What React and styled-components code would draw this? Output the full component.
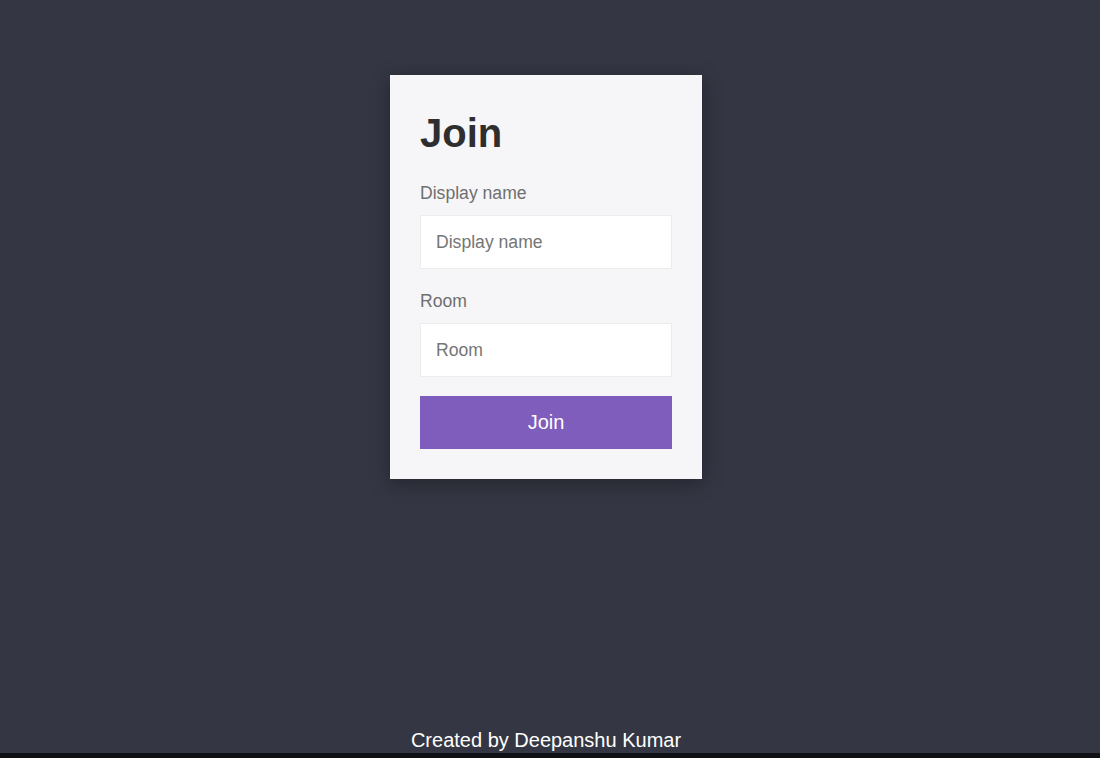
import React from "react";
import styled, { createGlobalStyle } from "styled-components";

const GlobalStyle = createGlobalStyle`
  html, body {
    margin: 0;
    padding: 0;
    background: #0e1013;
    font-family: "Liberation Sans", Arial, sans-serif;
  }
`;

const Page = styled.div`
  height: 753px;
  width: 1092px;
  background: #343743;
  display: flex;
  flex-direction: column;
  align-items: center;
  box-shadow: 8px 0 0 #343743;
`;

const Card = styled.form`
  margin-top: 75px;
  width: 312px;
  box-sizing: border-box;
  padding: 30px;
  background: #f6f6f8;
  box-shadow: 0 4px 18px rgba(0, 0, 0, 0.35);
  display: flex;
  flex-direction: column;
`;

const Title = styled.h1`
  margin: 5px 0 27px;
  font-size: 40px;
  line-height: 46px;
  font-weight: 700;
  color: #2e2e30;
`;

const Label = styled.label`
  display: block;
  font-size: 17.6px;
  line-height: 21px;
  color: #6f6f6f;
  margin-bottom: 11px;
`;

const Input = styled.input`
  display: block;
  box-sizing: border-box;
  width: 100%;
  height: 54px;
  padding: 0 15px;
  border: 1px solid #ececec;
  background: #fff;
  font-family: inherit;
  font-size: 17.6px;
  color: #333;
  outline: none;
  margin-bottom: ${(p) => p.$gap || 0}px;
  &::placeholder {
    color: #757575;
  }
`;

const Button = styled.button`
  height: 53px;
  width: 100%;
  border: none;
  background: #7e5dbd;
  color: #fff;
  font-family: inherit;
  font-size: 20px;
  cursor: pointer;
`;

const Footer = styled.footer`
  margin-top: auto;
  padding-bottom: 1px;
  color: #fff;
  font-size: 20px;
  line-height: 23px;
`;

export default function App() {
  return (
    <>
      <GlobalStyle />
      <Page>
        <Card onSubmit={(e) => e.preventDefault()}>
          <Title>Join</Title>
          <Label htmlFor="name">Display name</Label>
          <Input id="name" placeholder="Display name" $gap={22} />
          <Label htmlFor="room">Room</Label>
          <Input id="room" placeholder="Room" $gap={19} />
          <Button type="submit">Join</Button>
        </Card>
        <Footer>Created by Deepanshu Kumar</Footer>
      </Page>
    </>
  );
}
